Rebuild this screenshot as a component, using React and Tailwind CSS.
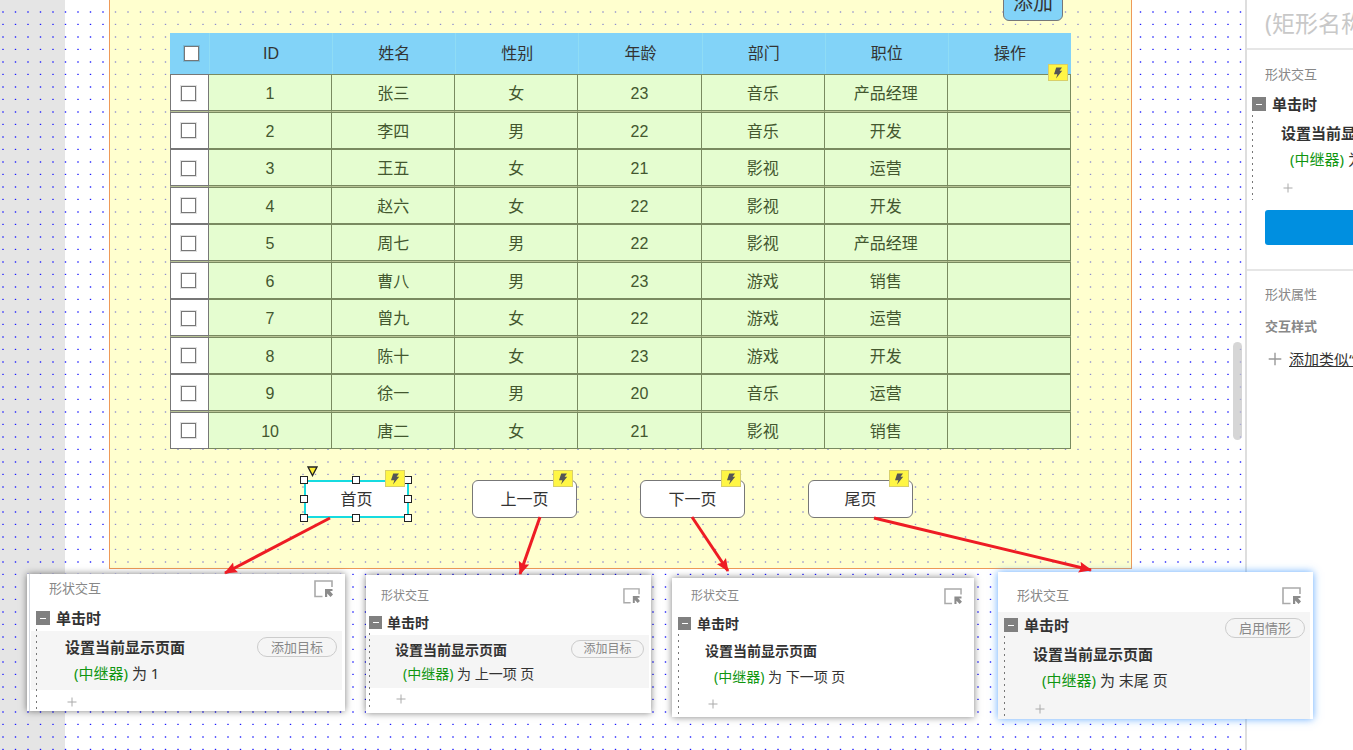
import React from 'react';
import clsx from 'clsx';

const COLUMNS = ['ID', '姓名', '性别', '年龄', '部门', '职位', '操作'];

const ROWS = [
  [1, '张三', '女', 23, '音乐', '产品经理'],
  [2, '李四', '男', 22, '音乐', '开发'],
  [3, '王五', '女', 21, '影视', '运营'],
  [4, '赵六', '女', 22, '影视', '开发'],
  [5, '周七', '男', 22, '影视', '产品经理'],
  [6, '曹八', '男', 23, '游戏', '销售'],
  [7, '曾九', '女', 22, '游戏', '运营'],
  [8, '陈十', '女', 23, '游戏', '开发'],
  [9, '徐一', '男', 20, '音乐', '运营'],
  [10, '唐二', '女', 21, '影视', '销售'],
];

const PAGERS = ['首页', '上一页', '下一页', '尾页'];

// Row heights and indents for each zoom level of the interaction list.
const SIZES = {
  lg: {
    label: 'text-[13px]',
    text: 'text-[15px]',
    box: 'size-[14px]',
    click: 'gap-[6px]',
    title: 'h-8 pl-[29px] pr-[5px]',
    action: 'pl-[38px] pb-[6px] h-[27px]',
    plus: 'h-6 pl-[31px]',
    pill: 'w-20 h-5 text-[13px]',
  },
  md: {
    label: 'text-[12px]',
    text: 'text-[14px]',
    box: 'size-[13px]',
    click: 'gap-[6px]',
    title: 'h-7 pl-[27px] pr-[5px]',
    action: 'pl-[36px] pb-1 h-7',
    plus: 'h-6 pl-[30px]',
    pill: 'w-[73px] h-[18px] text-[12px]',
  },
  sm: {
    label: 'text-[12px]',
    text: 'text-[14px]',
    box: 'size-[13px]',
    click: 'gap-[5px]',
    title: 'h-7 pl-[26px] pr-[5px]',
    action: 'pl-[34px] pb-[5px] h-[25px]',
    plus: 'h-[22px] pl-[27px]',
    pill: 'w-[73px] h-[18px] text-[12px]',
  },
};

const DotGrid = () => (
  <svg className="absolute inset-0 w-full h-full" aria-hidden="true">
    <defs>
      <pattern id="grid" width="25" height="25" patternUnits="userSpaceOnUse">
        <g fill="#1a1aff">
          <rect x="14.8" y="23.8" width="1.4" height="1.2" />
          <rect x="2.3" y="23.8" width="1.4" height="1.2" />
          <rect x="14.8" y="11.3" width="1.4" height="1.4" />
          <rect x="2.3" y="11.3" width="1.4" height="1.4" />
        </g>
      </pattern>
    </defs>
    <rect width="100%" height="100%" fill="url(#grid)" />
  </svg>
);

const Bolt = ({ className }) => (
  <span
    className={clsx(
      'absolute flex items-center justify-center w-5 h-[17px] bg-[#fff645] border border-[#d8cf6a]',
      className
    )}
  >
    <svg className="shrink-0" width="10" height="12" viewBox="0 0 10 12" aria-hidden="true">
      <path d="M3.2 0.5 H9 L6.6 3.8 H9.2 L3 11.5 L4.4 7.2 H1 Z" fill="#555" />
    </svg>
  </span>
);

const Checkbox = ({ label }) => (
  <input
    type="checkbox"
    aria-label={label}
    className="block mx-auto appearance-none size-[15px] bg-white border border-[#777] shadow-[0_0_0_1px_#0000001f]"
  />
);

const PlusIcon = ({ size = 10, color = '#aaa' }) => (
  <svg width={size} height={size} viewBox="0 0 10 10" className="shrink-0" aria-hidden="true">
    <path d="M5 0.5 V9.5 M0.5 5 H9.5" stroke={color} strokeWidth="1" />
  </svg>
);

const PickIcon = ({ className }) => (
  <svg className={className} viewBox="0 0 19 18" fill="none" aria-hidden="true">
    <path d="M18 7 V1 H1 V16.5 H8.5" stroke="#aaa" strokeWidth="1.6" />
    <path d="M11 9 H18.5 V11 H16 L19 14.5 L16.5 17 L13.2 13.6 V17 H11 Z" fill="#8c8c8c" />
  </svg>
);

// Teal frame's eight resize points, laid over the selected widget.
const Handles = () => (
  <span className="absolute -inset-1 grid grid-cols-[8px_8px_8px] justify-between content-between pointer-events-none">
    {[0, 1, 2, 3, 4, 5, 6, 7, 8].map((n) => (
      <span key={n} className={clsx('size-2 bg-white border border-[#222]', n === 4 && 'invisible')} />
    ))}
  </span>
);

const Pill = ({ size, children }) => (
  <button
    type="button"
    className={clsx('rounded-full border border-[#ccc] font-normal text-[#888] leading-none', SIZES[size].pill)}
  >
    {children}
  </button>
);

const Interaction = ({ size = 'lg', action, pill, clickPill, band, inset }) => {
  const s = SIZES[size];
  return (
    <div className={clsx('relative', inset)}>
      <div className={clsx('flex items-center justify-between h-[26px] pr-[5px] font-bold', s.text)}>
        <span className={clsx('flex items-center whitespace-nowrap', s.click)}>
          <span className={clsx('flex shrink-0 items-center justify-center bg-[#808080]', s.box)}>
            <span className="w-[6px] h-px bg-white" />
          </span>
          单击时
        </span>
        {clickPill && (
          <div className="pt-1">
            <Pill size={size}>{clickPill}</Pill>
          </div>
        )}
      </div>
      <div className={band}>
        <div className={clsx('flex items-center justify-between font-bold whitespace-nowrap', s.title, s.text)}>
          设置当前显示页面
          {pill && <Pill size={size}>{pill}</Pill>}
        </div>
        <div className={clsx('flex items-center whitespace-nowrap', s.action, s.text)}>
          <p>
            <span className="text-[#109610]">(中继器)</span> {action}
          </p>
        </div>
      </div>
      <div className={clsx('flex items-center', s.plus)}>
        <PlusIcon />
      </div>
      <span className="absolute top-6 bottom-0 w-px bg-[repeating-linear-gradient(#777_0_2px,transparent_2px_6px)]" />
    </div>
  );
};

const Card = ({ className, head, icon, size, children }) => (
  <section className={clsx('relative shrink-0 overflow-hidden bg-white', className)}>
    <header className={clsx('flex items-center justify-between', head)}>
      <h3 className={clsx('text-[#888]', SIZES[size].label)}>形状交互</h3>
      <button type="button" aria-label="选择目标">
        <PickIcon className={icon} />
      </button>
    </header>
    {children}
  </section>
);

const UserTable = () => (
  <div className="relative">
    <table className="w-full table-fixed border-separate border-spacing-0 text-center text-[16px] leading-5">
      <colgroup>
        <col className="w-[39px]" />
        {COLUMNS.map((c) => (
          <col key={c} />
        ))}
      </colgroup>
      <thead>
        <tr className="h-[41px] bg-[#82d3f8] text-[#333]">
          <th className="p-0 pl-1">
            <Checkbox label="全选" />
          </th>
          {COLUMNS.map((c) => (
            <th key={c} className="p-0 font-normal border-l border-[#8fdcf5]">
              {c}
            </th>
          ))}
        </tr>
      </thead>
      <tbody>
        {ROWS.map((row) => (
          <tr key={row[0]} className="group h-[37px] odd:h-[38px] text-[#43572f]">
            <td className="p-0 pr-0.5 bg-white border border-[#777] group-odd:border-b-[#b9c496] group-odd:shadow-[inset_0_-1px_#777]">
              <Checkbox label={`选择 ${row[1]}`} />
            </td>
            {COLUMNS.map((c, i) => (
              <td
                key={c}
                className="p-0 pt-0.5 bg-[#e5fdd0] border-y border-r border-[#798a60] group-odd:border-b-[#b9c496] group-odd:shadow-[inset_0_-1px_#798a60]"
              >
                {row[i]}
              </td>
            ))}
          </tr>
        ))}
      </tbody>
    </table>
    <Bolt className="right-[3px] top-[31px]" />
  </div>
);

const Arrows = () => (
  <svg className="absolute inset-0 w-full h-full pointer-events-none" aria-hidden="true">
    <defs>
      <marker id="head" markerUnits="userSpaceOnUse" markerWidth="13" markerHeight="12" refX="12" refY="6" orient="auto">
        <path d="M0 0.5 L13 6 L0 11.5 L2 6 Z" fill="#ee1c24" />
      </marker>
    </defs>
    <g stroke="#ee1c24" strokeWidth="3">
      <path d="M330 518 L225 573" markerEnd="url(#head)" />
      <path d="M540 517 L520 574" markerEnd="url(#head)" />
      <path d="M692 517 L728 571" markerEnd="url(#head)" />
      <path d="M874 518 L1091 570" markerEnd="url(#head)" />
    </g>
  </svg>
);

const Board = () => (
  <div className="relative ml-[109px] w-[1023px] pl-[60px] pr-[60px] pb-[50px] flex flex-col bg-[#ffffa0]/50 border border-t-0 border-[#ee9a58]">
    <button
      type="button"
      className="self-end -mt-[14px] mr-2 w-[60px] h-[35px] pb-0.5 shrink-0 rounded-[6px] border border-[#777] bg-[#82d3f8] text-[20px] leading-none text-[#333]"
    >
      添加
    </button>
    <div className="mt-3">
      <UserTable />
    </div>
    <div className="mt-[31px] flex justify-center gap-16 pr-[25px]">
      {PAGERS.map((name, i) => (
        <div key={name} className="relative">
          <button
            type="button"
            className={clsx(
              'block w-[105px] -mr-px h-[38px] pt-0.5 bg-white text-[16px] text-[#333] border',
              i === 0 ? 'border-2 border-[#16dbe0]' : 'rounded-[6px] border-[#777]'
            )}
          >
            {name}
          </button>
          {i === 0 && (
            <>
              <Handles />
              <svg className="absolute left-[3px] -top-[14px]" width="11" height="11" viewBox="0 0 11 11" aria-hidden="true">
                <path d="M1 1 H10 L5.5 9.5 Z" fill="#ffee33" stroke="#222" strokeWidth="1.4" />
              </svg>
            </>
          )}
          <Bolt className="right-[3px] -top-[10px]" />
        </div>
      ))}
    </div>
  </div>
);

const Inspector = () => (
  <aside className="w-[108px] shrink-0 overflow-hidden bg-white border-l-2 border-[#dedede]">
    <div className="h-[50px] pl-[18px] border-b-2 border-[#e6e6e6]">
      <input
        aria-label="形状名称"
        placeholder="(矩形名称)"
        className="w-full h-[46px] outline-none text-[23px] placeholder:text-[#c8c8c8]"
      />
    </div>
    <h3 className="h-[41px] pt-[9px] pl-[18px] flex items-center text-[13px] text-[#888]">形状交互</h3>
    <Interaction action="为 1" inset="ml-[5px]" />
    <button type="button" aria-label="新建交互" className="block mt-[10px] ml-[18px] w-full h-[35px] rounded-[3px] bg-[#008fe0]" />
    <div className="mt-6 pt-[14px] border-t-2 border-[#e6e6e6] pl-[18px] flex flex-col gap-3 whitespace-nowrap">
      <h3 className="h-5 flex items-center text-[13px] text-[#888]">形状属性</h3>
      <h4 className="h-5 flex items-center text-[13px] font-bold text-[#888]">交互样式</h4>
      <div className="h-5 flex items-center gap-[7px] pl-[3px]">
        <PlusIcon size={14} color="#999" />
        <a href="#style" className="text-[15px] leading-5 underline text-[#333]">添加类似“</a>
      </div>
    </div>
  </aside>
);

// Callouts sit over the canvas, one for each pager button.
const Callouts = () => (
  <div className="absolute left-[27px] top-[572px] flex items-start gap-[21px]">
    <Card
      size="lg"
      className="mt-0.5 w-[318px] h-[137px] shadow-[0_0_7px_#00000080]"
      head="h-[31px] pb-0.5 pl-[22px] pr-3"
      icon="w-[19px] h-[18px]"
    >
      <span className="absolute left-[2px] inset-y-0 w-px bg-[#d5d9e0]" />
      <Interaction
        action="为 1"
        pill="添加目标"
        inset="ml-[9px]"
        band="-ml-[5px] pl-[5px] mr-[3px] bg-[#f5f5f5]"
      />
    </Card>
    <Card
      size="sm"
      className="mt-[3px] w-[285px] h-[138px] shadow-[0_0_7px_#00000080]"
      head="h-[34px] pt-2 pl-[15px] pr-[11px]"
      icon="w-[17px] h-4"
    >
      <Interaction
        size="sm"
        action="为 上一项 页"
        pill="添加目标"
        inset="ml-[3px]"
        band="-ml-[3px] pl-[3px] mr-[2px] bg-[#f5f5f5]"
      />
    </Card>
    <Card
      size="md"
      className="mt-[6px] w-[302px] h-[139px] shadow-[0_0_7px_#00000080]"
      head="h-8 pt-1 pl-[19px] pr-3"
      icon="w-[18px] h-[17px]"
    >
      <Interaction size="md" action="为 下一项 页" inset="ml-[6px]" />
    </Card>
    <Card
      size="lg"
      className="ml-[3px] w-[315px] h-[147px] shadow-[0_0_8px_#3c96ffcc]"
      head="h-10 pt-2 pl-[19px] pr-3"
      icon="w-[19px] h-[18px]"
    >
      <Interaction action="为 末尾 页" clickPill="启用情形" inset="pl-[6px] mr-[3px] bg-[#f5f5f5]" />
    </Card>
  </div>
);

export default function App() {
  return (
    <div className="relative flex min-h-screen overflow-hidden bg-white text-[#333] font-['Noto_Sans','Noto_Sans_CJK_SC',sans-serif]">
      <main className="relative flow-root flex-1 overflow-hidden font-['Liberation_Sans','Noto_Sans_CJK_SC',sans-serif]">
        <div className="absolute inset-y-0 left-0 w-[65px] bg-[#e5e5e5]" />
        <DotGrid />
        <Board />
        <span className="absolute right-[3px] top-[342px] w-[9px] h-[98px] rounded-full bg-[#ccc]/80" />
      </main>
      <Inspector />
      <Callouts />
      <Arrows />
    </div>
  );
}
